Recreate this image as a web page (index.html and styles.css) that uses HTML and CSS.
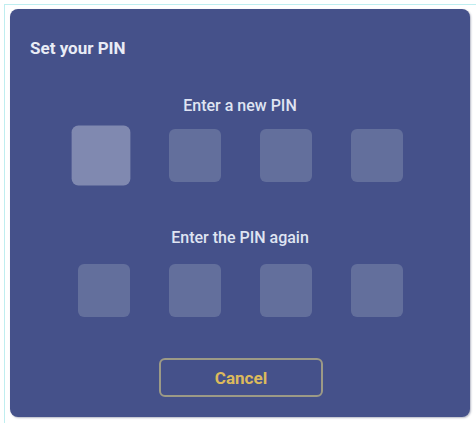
FILE: index.html
```html
<!DOCTYPE html>
<html>
<head>
<meta charset="utf-8">
<link rel="stylesheet" href="styles.css">
</head>
<body>
<div class="frame">
  <div class="dialog">
    <div class="title">Set your PIN</div>
    <div class="label first">Enter a new PIN</div>
    <div class="pins">
      <div class="pin focused"></div>
      <div class="pin"></div>
      <div class="pin"></div>
      <div class="pin"></div>
    </div>
    <div class="label second">Enter the PIN again</div>
    <div class="pins">
      <div class="pin"></div>
      <div class="pin"></div>
      <div class="pin"></div>
      <div class="pin"></div>
    </div>
    <div class="actions">
      <button class="cancel">Cancel</button>
    </div>
  </div>
</div>
</body>
</html>
```
FILE: styles.css
```css
html, body {
  margin: 0;
  background: #ffffff;
}
body {
  padding: 4px 0 0 4px;
  font-family: Roboto, "Noto Sans", sans-serif;
}
.frame {
  border-top: 1px solid #bfeef0;
  border-left: 1px solid #bfeef0;
  padding: 4px 0 6px 5px;
}
.dialog {
  box-sizing: border-box;
  width: 460px;
  height: 408px;
  background: #45518a;
  border-radius: 8px;
  box-shadow: 1px 1px 2px rgba(40, 50, 90, 0.35);
  padding: 29px 20px 0 20px;
  display: flex;
  flex-direction: column;
  color: #e9ecf6;
}
.title {
  font-size: 17px;
  font-weight: 700;
  line-height: 20px;
}
.label {
  text-align: center;
  font-size: 16px;
  font-weight: 500;
  line-height: 20px;
  color: #dfe4f2;
}
.label.first {
  margin-top: 38px;
  margin-bottom: 13px;
}
.label.second {
  margin-top: 46px;
  margin-bottom: 16px;
}
.pins {
  display: flex;
  justify-content: center;
  gap: 39px;
  padding-left: 1px;
}
.pin {
  width: 52px;
  height: 53px;
  border-radius: 6px;
  background: #636f9c;
}
.pin.focused {
  background: #8089b0;
  transform: translate(-3px, 0) scale(1.13);
}
.actions {
  display: flex;
  justify-content: center;
  margin-top: 41px;
  padding-left: 2px;
}
.cancel {
  box-sizing: border-box;
  width: 164px;
  height: 39px;
  background: transparent;
  border: 2px solid #9c9a86;
  border-radius: 6px;
  color: #dcba5c;
  font-family: Roboto, "Noto Sans", sans-serif;
  font-size: 17px;
  font-weight: 700;
  padding: 0;
}
```
